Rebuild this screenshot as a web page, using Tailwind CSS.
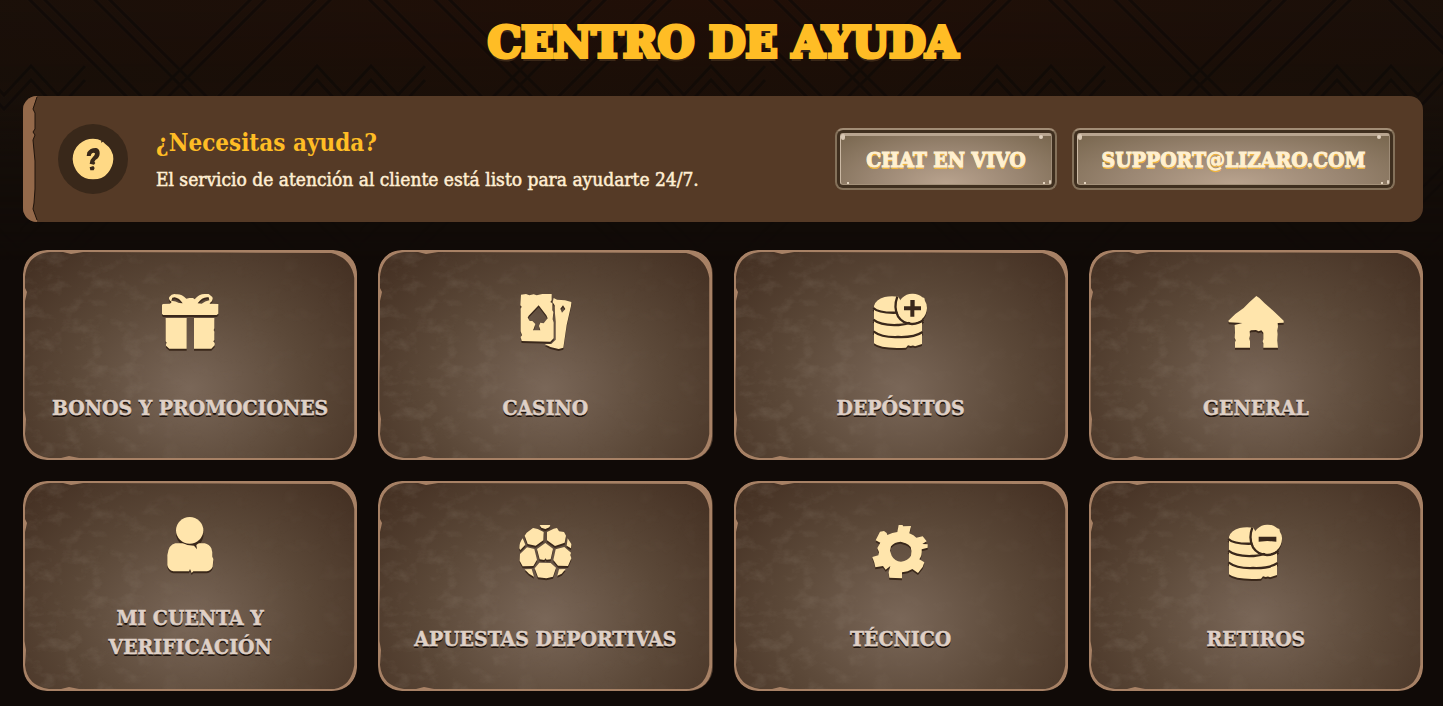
<!DOCTYPE html>
<html lang="es">
<head>
<meta charset="utf-8">
<meta name="viewport" content="width=device-width, initial-scale=1">
<title>Centro de ayuda</title>
<script src="https://cdn.jsdelivr.net/npm/@tailwindcss/browser@4"></script>
</head>
<body class="relative min-h-screen bg-[#100a07] font-['DejaVu_Serif_Condensed','DejaVu_Serif',serif] font-bold">

<!-- Shared symbols -->
<svg class="absolute size-0" aria-hidden="true">
  <defs>
    <filter id="grain" x="0" y="0" width="100%" height="100%">
      <feTurbulence type="fractalNoise" baseFrequency="0.05 0.07" numOctaves="5" seed="8"/>
      <feColorMatrix values="0 0 0 0 0.50  0 0 0 0 0.43  0 0 0 0 0.35  2.2 0 0 0 -1.05"/>
    </filter>
    <linearGradient id="grainFade"><stop offset="0" stop-color="#fff"/><stop offset=".35" stop-color="#fff" stop-opacity=".7"/><stop offset=".5" stop-color="#fff" stop-opacity=".15"/><stop offset="1" stop-color="#fff" stop-opacity=".25"/></linearGradient>
    <mask id="grainMask"><rect width="334" height="210" fill="url(#grainFade)"/></mask>
  </defs>
  <symbol id="frame" viewBox="0 0 334 210" preserveAspectRatio="none">
    <rect x="2" y="2" width="330" height="206" filter="url(#grain)" mask="url(#grainMask)" opacity=".18"/>
    <path fill="#a78165" fill-rule="evenodd" d="M24 0H310Q334 1 334 26V184Q333 209 308 210H24Q1 208 0 184V24Q2 1 24 0ZM27 2Q4 4 2 27V38L4 42L2 51V104L1.500 128L1.500 160L3 169L2 184Q4 205 26 208L38 208L46 206L56 208H311Q328 205 331 184V28Q328 8 308 3L200 2.500L60 2L48 4L40 2Z"/>
  </symbol>
  <symbol id="coins" viewBox="33 36 180 180">
    <path d="M42 78Q47 58 74 51Q92 47 115 50L150 110L186 115V192Q178 194 165 199Q160 194 152 198L144 196L138 203Q62 207 42 190Z"/>
    <path fill="none" stroke="#3a281b" stroke-width="7" d="M40 84Q56 100 112 98M40 119Q62 137 112 135Q134 136 150 127M40 154Q66 173 114 171Q162 173 188 156"/>
    <path fill="none" stroke="#3a281b" stroke-width="7" d="M112 50Q100 82 114 109Q128 131 156 132Q178 131 190 119"/>
  </symbol>
</svg>

<!-- Backdrop: engraved diagonals fading downward -->
<svg class="absolute inset-x-0 top-0 h-[260px] w-full" aria-hidden="true">
  <defs>
    <radialGradient id="glow" cx=".5" cy="0" r=".8"><stop offset="0" stop-color="#210f07"/><stop offset="1" stop-color="#17100a"/></radialGradient>
    <linearGradient id="fade" x2="0" y2="1"><stop offset="0" stop-color="#fff"/><stop offset=".4" stop-color="#fff" stop-opacity=".85"/><stop offset="1" stop-color="#fff" stop-opacity="0"/></linearGradient>
    <mask id="fadeMask"><rect width="100%" height="260" fill="url(#fade)"/></mask>
    <pattern id="weave" width="340" height="260" patternUnits="userSpaceOnUse" x="20">
      <g fill="none" stroke="#0c0806" stroke-width="3" stroke-opacity=".6">
        <path d="M0-10L270 260M15-10L285 260M65-10L335 260M80-10L350 260M240-10L-30 260M255-10L-15 260M305-10L35 260M320-10L50 260"/>
        <path d="M270 95l27-29 27 29 27-29M-70 95l27-29 27 29 27-29 27 29 27-29M270 109l27-29 27 29 27-29M-70 109l27-29 27 29 27-29 27 29 27-29"/>
      </g>
    </pattern>
  </defs>
  <g mask="url(#fadeMask)">
    <rect width="100%" height="260" fill="url(#glow)"/>
    <rect width="100%" height="260" fill="url(#weave)"/>
  </g>
</svg>

<main class="relative pt-4 pr-5 pb-4 pl-[23px]">
  <h1 class="text-center font-['DejaVu_Serif',serif] text-[42px] leading-[54px] text-[#ffbd25] uppercase [-webkit-text-stroke:4px_#ffbd25] [text-shadow:0_4px_0_#3b2818]">Centro de ayuda</h1>

  <section class="relative mt-[26px] flex min-h-[126px] items-center overflow-hidden rounded-[14px] bg-[#553a26] pr-7 pl-[35px]">
    <svg class="absolute inset-y-0 left-0 h-full w-4" viewBox="0 0 16 126" preserveAspectRatio="none" aria-hidden="true">
      <path d="M0 0H14L10 13L12 17V33L10 36L12 39L10 44L12 65V93L11 107L10 113L14 124V126H0Z" fill="#94694a"/>
      <path d="M14 1L10 13L12 17V33L10 36L12 39L10 44L12 65V93L11 107L10 113L14 124" fill="none" stroke="#1f130b"/>
    </svg>
    <div class="flex size-[70px] shrink-0 items-center justify-center rounded-full bg-[#39281a]">
      <svg class="size-[42px]" viewBox="0 0 126 126" aria-hidden="true">
        <path fill="#ffd985" d="M63 2Q79 2 88 8L87 14L93 11L99 17Q124 34 124 63Q123 86 108 104Q93 124 63 124Q35 124 18 104Q3 86 2 63Q3 35 22 18Q40 2 63 2Z"/>
        <path fill="#39281a" d="M44 54L46 43Q55 29 73 30Q84 34 83 47Q82 59 71 65L67 71L70 75L66 80L53 77Q53 65 61 59Q70 53 69 46Q64 42 58 48L56 54ZM53 88L64 84L68 90L65 97L55 97Z"/>
      </svg>
    </div>
    <div class="ml-7 flex-1 pt-1">
      <h2 class="text-2xl leading-9 text-[#ffbd25]">¿Necesitas ayuda?</h2>
      <p class="text-[19px] leading-9 font-normal text-[#ffeed3] [-webkit-text-stroke:0.5px_#ffeed3]">El servicio de atención al cliente está listo para ayudarte 24/7.</p>
    </div>
    <div class="flex shrink-0 gap-[15px]">
      <button type="button" class="min-w-[222px] rounded-lg border-2 border-t-[#a28d76] border-r-[#84715a] border-b-[#84715a] border-l-[#84715a] bg-[#3f2f1f] p-[3px] text-[21px] text-[#fff0d0] uppercase [-webkit-text-stroke:1px_#fff0d0] [text-shadow:0_2px_0_#f0b53f]">
        <span class="relative flex h-[52px] items-center justify-center rounded-[3px] border border-t-[3px] border-t-[#b8a590] border-r-[#9f8d78] border-b-[#a39079] border-l-[#cbb9a4] bg-radial-[at_50%_100%] from-[#b9a38e] via-[#9a8672] to-[#79674f] px-5">Chat en vivo<i class="absolute -top-0.5 left-0 h-1.5 w-1 rounded-full bg-[#d8c7b3]"></i><i class="absolute -top-px right-2 h-1 w-1 rounded-full bg-[#e0d0bd]"></i><i class="absolute bottom-0 left-1.5 size-0.5 rounded-full bg-[#fff0dc]"></i><i class="absolute right-1.5 bottom-0 size-0.5 rounded-full bg-[#fff0dc]"></i><i class="absolute right-0 bottom-0 h-1 w-0.5 rounded-full bg-[#e0d0bd]"></i></span>
      </button>
      <a href="mailto:support@lizaro.com" class="min-w-[323px] rounded-lg border-2 border-t-[#a28d76] border-r-[#84715a] border-b-[#84715a] border-l-[#84715a] bg-[#3f2f1f] p-[3px] text-[21px] text-[#fff0d0] uppercase [-webkit-text-stroke:1px_#fff0d0] [text-shadow:0_2px_0_#f0b53f]">
        <span class="relative flex h-[52px] items-center justify-center rounded-[3px] border border-t-[3px] border-t-[#b8a590] border-r-[#9f8d78] border-b-[#a39079] border-l-[#cbb9a4] bg-radial-[at_50%_100%] from-[#b9a38e] via-[#9a8672] to-[#79674f] px-5">support@lizaro.com<i class="absolute -top-0.5 left-0 h-1.5 w-1 rounded-full bg-[#d8c7b3]"></i><i class="absolute -top-px right-2 h-1 w-1 rounded-full bg-[#e0d0bd]"></i><i class="absolute bottom-0 left-1.5 size-0.5 rounded-full bg-[#fff0dc]"></i><i class="absolute right-1.5 bottom-0 size-0.5 rounded-full bg-[#fff0dc]"></i><i class="absolute right-0 bottom-0 h-1 w-0.5 rounded-full bg-[#e0d0bd]"></i></span>
      </a>
    </div>
  </section>

  <nav aria-label="Temas de ayuda" class="mt-7 grid grid-cols-4 gap-[21px] text-center text-[21px] leading-[29px] text-[#dfd0c6] uppercase [-webkit-text-stroke:0.5px_#dfd0c6] [text-shadow:0_2px_0_#1d120c]">
    <a href="#bonos" class="relative flex min-h-[210px] flex-col items-center justify-between overflow-hidden rounded-3xl bg-radial-[at_50%_66%] from-[#7a6758] via-[#5b4838] to-[#412d20] px-4 pt-[42px] pb-[38px]">
      <svg class="absolute inset-0 size-full" aria-hidden="true"><use href="#frame"/></svg>
      <svg class="relative size-[60px] drop-shadow-[0_2px_0_#3a281b]" viewBox="60 36 180 180" fill="#ffe5ac" aria-hidden="true">
        <path fill-rule="evenodd" d="M68 72L90 71L95 66Q84 60 88 51Q96 40 108 43Q124 41 139 56L148 54L159 54L164 58Q177 42 194 42H206L217 51Q221 61 210 69L209 71L235 72V101L230 105H69L66 101V76ZM97 53L94 62Q108 63 117 69L128 70Q118 54 104 52ZM173 70L185 71Q195 63 208 61L206 52Q187 49 173 70Z"/>
        <path d="M77 114H140V206H88L78 197V192L80 188L77 184ZM162 114H223V145L221 150L223 155V180L220 184L224 190V196L214 206H162Z"/>
      </svg>
      <span class="relative">Bonos y promociones</span>
    </a>
    <a href="#casino" class="relative flex min-h-[210px] flex-col items-center justify-between overflow-hidden rounded-3xl bg-radial-[at_50%_66%] from-[#7a6758] via-[#5b4838] to-[#412d20] px-4 pt-[42px] pb-[38px]">
      <svg class="absolute inset-0 size-full" aria-hidden="true"><use href="#frame"/></svg>
      <svg class="relative size-[60px] drop-shadow-[0_2px_0_#3a281b]" viewBox="45 36 180 180" fill="#ffe5ac" aria-hidden="true">
        <path fill-rule="evenodd" d="M63 44L78 42L88 46L101 43L110 46L127 42H155V61L151 66L157 70V91L160 96L158 118L161 128V175L151 185L65 183L62 171L66 166L62 154V86L65 80L61 76ZM116 76L86 107L83 113L89 123L97 123L106 132L102 144L99 151H121L117 138L121 128L131 130L143 115L139 106Z"/>
        <path fill-rule="evenodd" d="M161 54L171 59L195 61L214 66L213 78L200 135L190 203L176 207L151 201L134 192H154L167 179V125L165 101L164 76L158 67ZM189 76L181 86L186 98L196 87Z"/>
      </svg>
      <span class="relative">Casino</span>
    </a>
    <a href="#depositos" class="relative flex min-h-[210px] flex-col items-center justify-between overflow-hidden rounded-3xl bg-radial-[at_50%_66%] from-[#7a6758] via-[#5b4838] to-[#412d20] px-4 pt-[42px] pb-[38px]">
      <svg class="absolute inset-0 size-full" aria-hidden="true"><use href="#frame"/></svg>
      <svg class="relative size-[60px] drop-shadow-[0_2px_0_#3a281b]" viewBox="33 36 180 180" fill="#ffe5ac" aria-hidden="true">
        <use href="#coins" x="33" y="36" width="180" height="180"/>
        <path d="M156 41Q175 40 187 52L193 54L195 63Q202 73 201 84Q200 105 186 117Q174 127 157 127Q137 126 125 114Q112 101 113 83Q115 65 126 54Q139 41 156 41Z"/>
        <path fill="#3a281b" d="M151 60V79H132V91H151V110H163V91H183V79H164V60Z"/>
      </svg>
      <span class="relative">Depósitos</span>
    </a>
    <a href="#general" class="relative flex min-h-[210px] flex-col items-center justify-between overflow-hidden rounded-3xl bg-radial-[at_50%_66%] from-[#7a6758] via-[#5b4838] to-[#412d20] px-4 pt-[42px] pb-[38px]">
      <svg class="absolute inset-0 size-full" aria-hidden="true"><use href="#frame"/></svg>
      <svg class="relative size-[60px] drop-shadow-[0_2px_0_#3a281b]" viewBox="48 36 180 180" fill="#ffe5ac" aria-hidden="true">
        <path d="M139 48L148 54L164 70L188 91L207 109L221 122V128L203 129L204 140L202 152L203 163L202 182L204 203H160V190L158 184L160 178V158L154 151L146 154L138 150L123 151L119 154L120 166L118 176L120 184V203H75V187L77 181L74 173L75 158L74 135L97 129L57 127L55 122L76 102L101 84L118 67Z"/>
      </svg>
      <span class="relative">General</span>
    </a>
    <a href="#cuenta" class="relative flex min-h-[210px] flex-col items-center justify-between overflow-hidden rounded-3xl bg-radial-[at_50%_66%] from-[#7a6758] via-[#5b4838] to-[#412d20] px-4 pt-[34px] pb-[30px]">
      <svg class="absolute inset-0 size-full" aria-hidden="true"><use href="#frame"/></svg>
      <svg class="relative size-[60px] drop-shadow-[0_2px_0_#3a281b]" viewBox="30 30 180 180" fill="#ffe5ac" aria-hidden="true">
        <path d="M76 115H164Q178 118 184 130Q188 140 187 155L190 162L188 185Q183 196 171 199H130L125 204L120 192L117 199L70 199Q54 195 52 180V151Q56 118 76 115Z"/>
        <path fill="#3a281b" d="M78 85Q84 114 112 120L132 122L141 133L139 120Q157 110 161 85Z"/>
        <ellipse cx="119" cy="76" rx="41" ry="40"/>
      </svg>
      <span class="relative">Mi cuenta y<br>verificación</span>
    </a>
    <a href="#deportes" class="relative flex min-h-[210px] flex-col items-center justify-between overflow-hidden rounded-3xl bg-radial-[at_50%_66%] from-[#7a6758] via-[#5b4838] to-[#412d20] px-4 pt-[42px] pb-[38px]">
      <svg class="absolute inset-0 size-full" aria-hidden="true"><use href="#frame"/></svg>
      <svg class="relative size-[60px] drop-shadow-[0_2px_0_#3a281b]" viewBox="30 39 180 180" fill="#ffe5ac" aria-hidden="true">
        <path d="M104 45H136L133 52L121 57L109 53ZM84 54L98 57L116 66L115 91L92 107L68 102L59 77L65 68ZM126 66L146 56L156 54L162 64L177 66L183 77L179 98L150 108L126 91ZM121 99L144 116L137 148L125 149L121 145L118 150L104 148L96 117ZM53 85L61 104L46 120L43 115Q43 97 53 85ZM188 85L199 102L198 115L185 107ZM66 112L88 117L96 149L85 168L53 169L44 152L45 132ZM152 118L178 111L198 128L196 135L199 145L189 168L159 167L145 150ZM103 158L137 159L153 173L144 200L124 205L99 202L89 175ZM59 178L80 177L87 200L72 191ZM162 178L182 177L170 191L157 197Z"/>
      </svg>
      <span class="relative">Apuestas deportivas</span>
    </a>
    <a href="#tecnico" class="relative flex min-h-[210px] flex-col items-center justify-between overflow-hidden rounded-3xl bg-radial-[at_50%_66%] from-[#7a6758] via-[#5b4838] to-[#412d20] px-4 pt-[42px] pb-[38px]">
      <svg class="absolute inset-0 size-full" aria-hidden="true"><use href="#frame"/></svg>
      <svg class="relative size-[60px] drop-shadow-[0_2px_0_#3a281b]" viewBox="33 39 180 180" fill="#ffe5ac" aria-hidden="true">
        <path fill-rule="evenodd" d="M116 45H128L129 49L153 48L148 70Q162 75 169 83L188 79L200 94L187 102L203 103V113L185 118Q187 136 178 148L193 157L188 171L174 189L157 177L143 184L126 187V205L88 203L86 187L91 168L77 179L69 168L46 172L43 158L37 141L55 136L57 127L52 114L61 98L47 91L60 65L72 63L80 69L82 75L97 69L112 66ZM122 95Q103 96 93 109L90 122L95 137Q104 154 123 155Q144 152 153 137Q156 122 152 111Q146 104 137 100Z"/>
      </svg>
      <span class="relative">Técnico</span>
    </a>
    <a href="#retiros" class="relative flex min-h-[210px] flex-col items-center justify-between overflow-hidden rounded-3xl bg-radial-[at_50%_66%] from-[#7a6758] via-[#5b4838] to-[#412d20] px-4 pt-[42px] pb-[38px]">
      <svg class="absolute inset-0 size-full" aria-hidden="true"><use href="#frame"/></svg>
      <svg class="relative size-[60px] drop-shadow-[0_2px_0_#3a281b]" viewBox="33 36 180 180" fill="#ffe5ac" aria-hidden="true">
        <use href="#coins" x="33" y="36" width="180" height="180"/>
        <path d="M156 41Q175 40 187 52L193 54L195 63Q202 73 201 84Q200 105 186 117Q174 127 157 127Q137 126 125 114Q112 101 113 83Q115 65 126 54Q139 41 156 41Z"/>
        <path fill="#3a281b" d="M131 77V92L157 90L184 92V77Z"/>
      </svg>
      <span class="relative">Retiros</span>
    </a>
  </nav>
</main>
</body>
</html>
